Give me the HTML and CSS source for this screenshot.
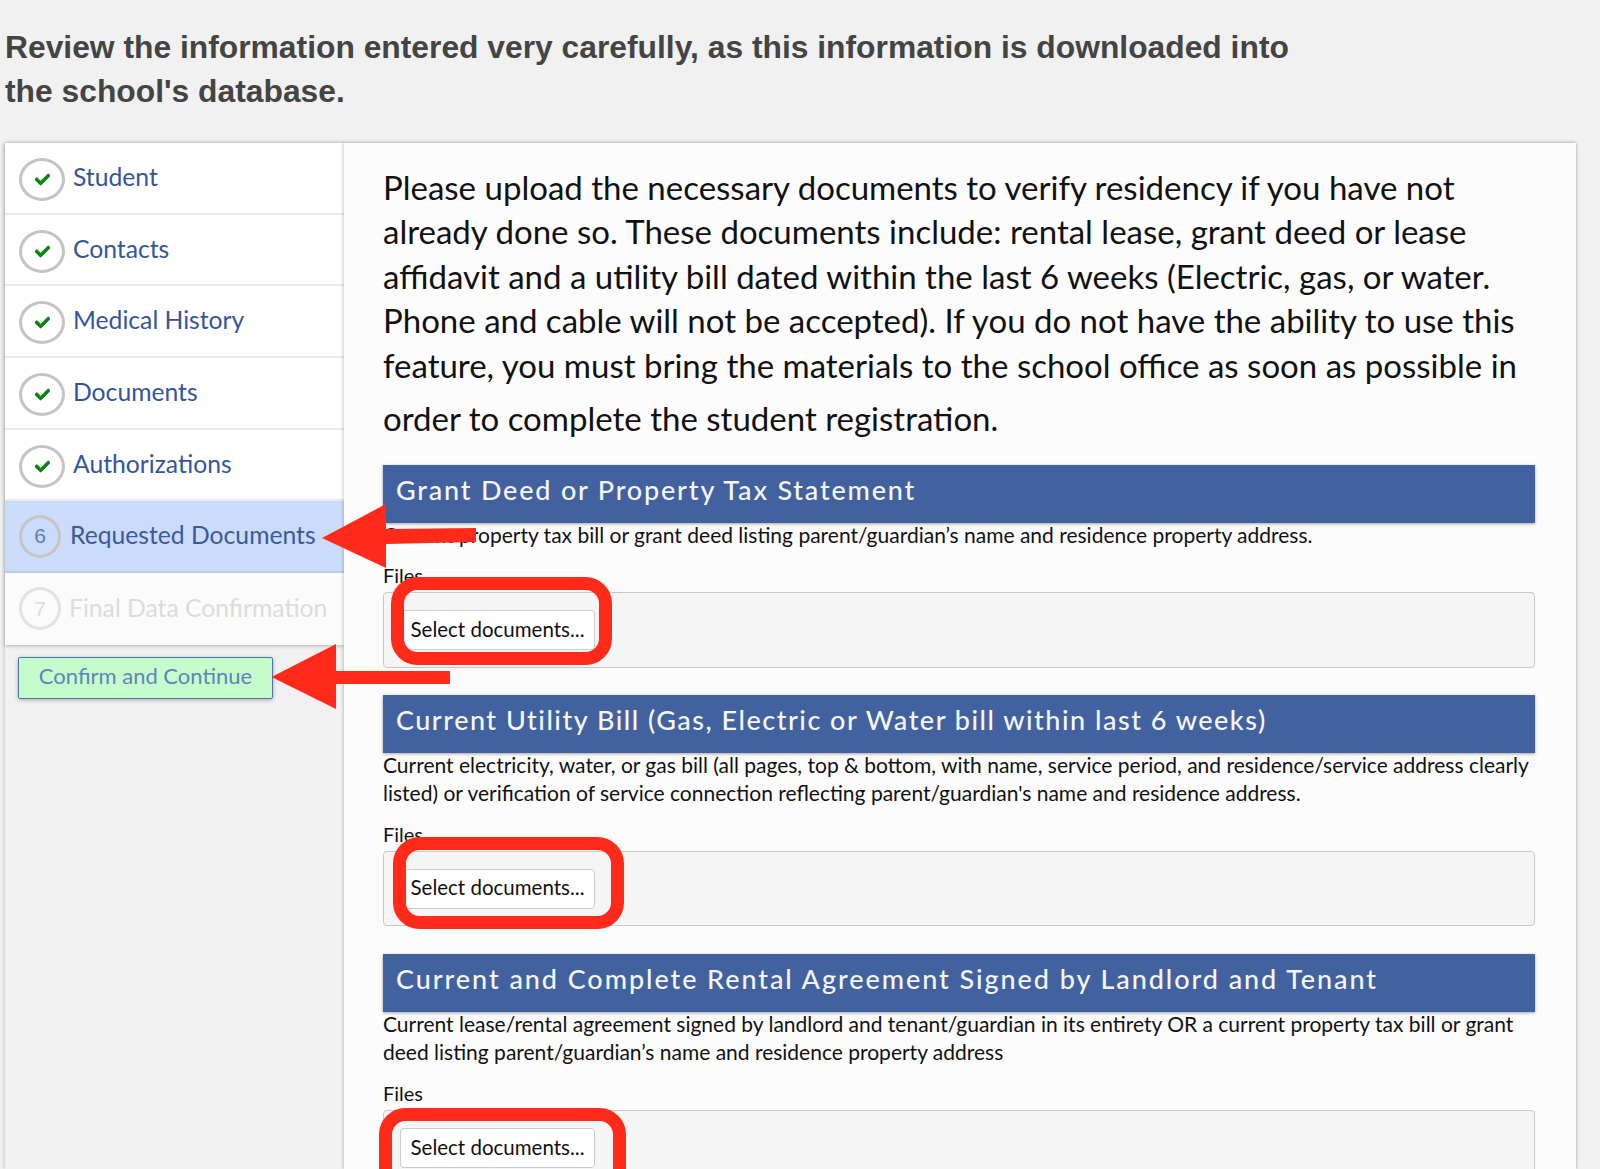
FILE: index.html
```html
<!DOCTYPE html>
<html lang="en">
<head>
<meta charset="utf-8">
<title>Requested Documents</title>
<link rel="stylesheet" href="styles.css">
</head>
<body>
<div class="page">
  <h1 class="review">Review the information entered very carefully, as this information is downloaded into<br>the school's database.</h1>
  <div class="card">
    <div class="left">
      <nav class="steps">
        <a class="step"><span class="ring"><svg class="check" viewBox="0 0 512 512"><path d="M173.9 439.4l-166.4-166.4c-10-10-10-26.2 0-36.2l36.2-36.2c10-10 26.2-10 36.2 0L192 312.7 432.1 72.6c10-10 26.2-10 36.2 0l36.2 36.2c10 10 10 26.2 0 36.2l-294.4 294.4c-10 10-26.2 10-36.2 0z"/></svg></span><span class="label">Student</span></a>
        <a class="step"><span class="ring"><svg class="check" viewBox="0 0 512 512"><path d="M173.9 439.4l-166.4-166.4c-10-10-10-26.2 0-36.2l36.2-36.2c10-10 26.2-10 36.2 0L192 312.7 432.1 72.6c10-10 26.2-10 36.2 0l36.2 36.2c10 10 10 26.2 0 36.2l-294.4 294.4c-10 10-26.2 10-36.2 0z"/></svg></span><span class="label">Contacts</span></a>
        <a class="step"><span class="ring"><svg class="check" viewBox="0 0 512 512"><path d="M173.9 439.4l-166.4-166.4c-10-10-10-26.2 0-36.2l36.2-36.2c10-10 26.2-10 36.2 0L192 312.7 432.1 72.6c10-10 26.2-10 36.2 0l36.2 36.2c10 10 10 26.2 0 36.2l-294.4 294.4c-10 10-26.2 10-36.2 0z"/></svg></span><span class="label">Medical History</span></a>
        <a class="step"><span class="ring"><svg class="check" viewBox="0 0 512 512"><path d="M173.9 439.4l-166.4-166.4c-10-10-10-26.2 0-36.2l36.2-36.2c10-10 26.2-10 36.2 0L192 312.7 432.1 72.6c10-10 26.2-10 36.2 0l36.2 36.2c10 10 10 26.2 0 36.2l-294.4 294.4c-10 10-26.2 10-36.2 0z"/></svg></span><span class="label">Documents</span></a>
        <a class="step"><span class="ring"><svg class="check" viewBox="0 0 512 512"><path d="M173.9 439.4l-166.4-166.4c-10-10-10-26.2 0-36.2l36.2-36.2c10-10 26.2-10 36.2 0L192 312.7 432.1 72.6c10-10 26.2-10 36.2 0l36.2 36.2c10 10 10 26.2 0 36.2l-294.4 294.4c-10 10-26.2 10-36.2 0z"/></svg></span><span class="label">Authorizations</span></a>
        <a class="step active"><span class="ring num">6</span><span class="label">Requested Documents</span></a>
        <a class="step disabled"><span class="ring num">7</span><span class="label">Final Data Confirmation</span></a>
      </nav>
      <button class="confirm" type="button">Confirm and Continue</button>
    </div>
    <main class="content">
      <p class="intro">Please upload the necessary documents to verify residency if you have not<br>already done so. These documents include: rental lease, grant deed or lease<br>affidavit and a utility bill dated within the last 6 weeks (Electric, gas, or water.<br>Phone and cable will not be accepted). If you do not have the ability to use this<br>feature, you must bring the materials to the school office as soon as possible in<span class="last">order to complete the student registration.</span></p>

      <section class="doc doc-single">
        <h2 class="doc-title">Grant Deed or Property Tax Statement</h2>
        <p class="doc-desc">Current property tax bill or grant deed listing parent/guardian’s name and residence property address.</p>
        <div class="files-label">Files</div>
        <div class="dropzone"><button class="select" type="button">Select documents...</button></div>
      </section>

      <section class="doc">
        <h2 class="doc-title tight">Current Utility Bill (Gas, Electric or Water bill within last 6 weeks)</h2>
        <p class="doc-desc">Current electricity, water, or gas bill (all pages, top &amp; bottom, with name, service period, and residence/service address clearly<br>listed) or verification of service connection reflecting parent/guardian's name and residence address.</p>
        <div class="files-label">Files</div>
        <div class="dropzone"><button class="select" type="button">Select documents...</button></div>
      </section>

      <section class="doc">
        <h2 class="doc-title wide">Current and Complete Rental Agreement Signed by Landlord and Tenant</h2>
        <p class="doc-desc">Current lease/rental agreement signed by landlord and tenant/guardian in its entirety OR a current property tax bill or grant<br>deed listing parent/guardian’s name and residence property address</p>
        <div class="files-label">Files</div>
        <div class="dropzone"><button class="select" type="button">Select documents...</button></div>
      </section>
    </main>
  </div>

  <svg class="marks" viewBox="0 0 1600 1169" aria-hidden="true">
    <path class="arrow" d="M322 538 L386 504 L386 529 L476 528 L476 542 L386 544 L386 568 Z"/>
    <path class="arrow" d="M271.5 677 L336 644 L336 671 L450 671 L450 684 L336 684 L336 709 Z"/>
    <rect class="ring-mark" x="397.5" y="583.5" width="208" height="75" rx="20"/>
    <rect class="ring-mark" x="399.5" y="843.5" width="218" height="79" rx="20"/>
    <rect class="ring-mark" x="385.5" y="1114.5" width="234" height="90" rx="20"/>
  </svg>
</div>
</body>
</html>
```

FILE: styles.css
```css
* { box-sizing: border-box; }
html, body { margin: 0; padding: 0; }
body { background: #f1f1f1; font-family: "Lato", "Liberation Sans", sans-serif; color: #111; }
.page { position: relative; width: 1600px; height: 1169px; overflow: hidden; }

.review {
  margin: 0;
  padding: 25px 0 0 5px;
  height: 143px;
  font: bold 31.8px/44px "Liberation Sans", Arial, sans-serif;
  color: #444;
}

.card {
  display: flex;
  margin-left: 5px;
  width: 1571px;
  height: 1026px;
  box-shadow: 0 0 4px rgba(0,0,0,.25);
}

.left { width: 339px; flex: none; background: #f1f1f1; }
.steps { display: flex; flex-direction: column; box-shadow: 0 1px 4px rgba(0,0,0,.25); }
.step {
  display: flex;
  align-items: center;
  height: 71.7px;
  padding-left: 14px;
  gap: 8px;
  background: #fff;
  border-bottom: 2px solid #e9e9e9;
  font-size: 24.7px;
  color: #34559c;
}
.label { padding-bottom: 3px; }
.ring {
  width: 46px;
  height: 43px;
  margin-top: 3px;
  flex: none;
  display: flex;
  align-items: center;
  justify-content: center;
  border: 3px solid #c4c4c4;
  border-radius: 50%;
  background: #fff;
}
.check { width: 15px; height: 15px; fill: #0a850f; stroke: #0a850f; stroke-width: 30; }
.step.active { gap: 9px; background: #cbdcfb; color: #3b5a9b; border-bottom-color: #bccde8; }
.step.active .ring { width: 42px; margin-top: 0; background: transparent; font: 21px "Liberation Sans", sans-serif; color: #5f7db3; }
.step.disabled { background: #fbfbfb; color: #dcdcdc; border-bottom: 0; }
.step.disabled .ring { width: 42px; margin-top: 0; background: transparent; border-color: #e2e2e2; font: 21px "Liberation Sans", sans-serif; color: #dcdcdc; }

.confirm {
  display: block;
  margin: 12px 0 0 13px;
  width: 255px;
  height: 42px;
  padding: 0 0 4px;
  background: #c6fdcc;
  border: 1px solid #4f74ad;
  border-radius: 2px;
  box-shadow: 0 1px 4px rgba(0,0,0,.3);
  font: 22px "Lato", sans-serif;
  color: #5f85ba;
}

.content {
  flex: 1;
  padding: 22px 41px 0 39px;
  background: #fcfcfc;
  box-shadow: -1px 0 3px rgba(0,0,0,.2);
}
.intro { margin: 0 0 25px; font-size: 33px; line-height: 44.4px; color: #111; white-space: nowrap; }
.last { display: block; margin-top: 9px; }

.doc { margin-bottom: 28px; }
.doc-single { margin-bottom: 27px; }
.doc-title {
  margin: 0;
  height: 58px;
  padding: 7px 0 0 13px;
  background: #42619f;
  box-shadow: 0 1px 3px rgba(0,0,0,.35);
  font-size: 27px;
  line-height: 36px;
  font-weight: 500;
  letter-spacing: 1.8px;
  color: #f4f6fa;
  white-space: nowrap;
}
.doc-title.tight { letter-spacing: 1.5px; }
.doc-title.wide { letter-spacing: 1.93px; }
.doc-desc { margin: -2px 0 0; font-size: 21px; line-height: 28px; color: #111; white-space: nowrap; }
.files-label { margin: 13px 0 3px; font-size: 20px; line-height: 28px; }
.doc-single .files-label { margin: 12px 0 3px; }
.dropzone {
  height: 75.5px;
  padding: 17px 16px;
  background: #f5f5f5;
  border: 1px solid #c8c8c8;
  border-radius: 4px;
}
.select {
  display: block;
  width: 195px;
  height: 40px;
  padding: 0 0 3px;
  background: #fff;
  border: 1px solid #ccc;
  border-radius: 4px;
  font: 20.5px "Lato", sans-serif;
  color: #111;
}

.marks { position: absolute; left: 0; top: 0; width: 1600px; height: 1169px; pointer-events: none; }
.arrow { fill: #ff2a1a; }
.ring-mark { fill: none; stroke: #ff2a1a; stroke-width: 13; }
```
